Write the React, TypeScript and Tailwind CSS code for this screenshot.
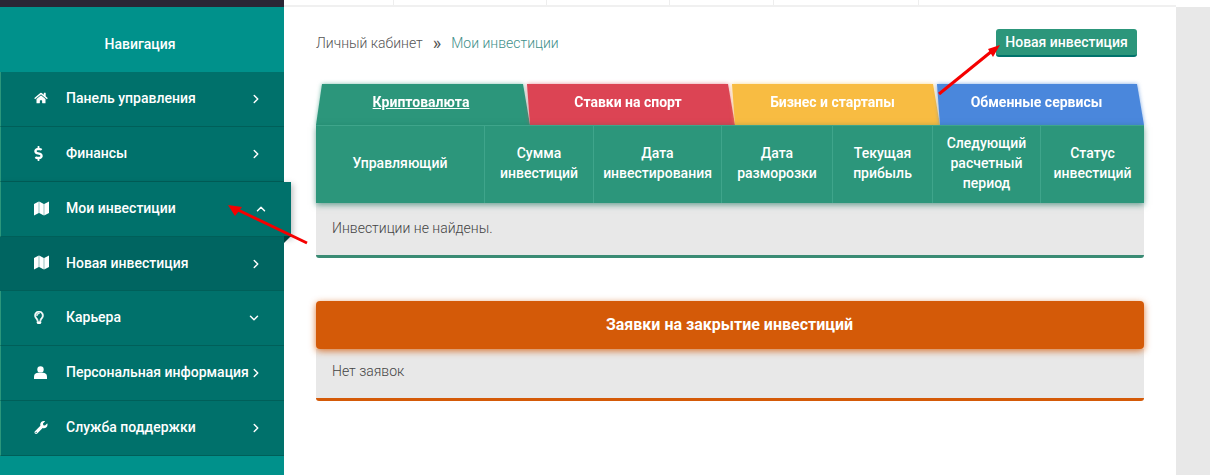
import { ChevronDown, ChevronRight, ChevronUp } from 'lucide-react'
import { FaDollarSign, FaHome, FaRegLightbulb, FaWrench } from 'react-icons/fa'
import type { ComponentType } from 'react'

type IconProps = { className?: string }

// folded map, three panels with thin gaps
const MapIcon = ({ className }: IconProps) => (
  <svg className={className} viewBox="0 0 15 15" fill="currentColor">
    <path d="M0 3 L4.8 .5 V12 L0 14.5Z M5.2 .5 L9.8 3 V14.5 L5.2 12Z M10.2 3 L15 .5 V12 L10.2 14.5Z" />
  </svg>
)

const UserIcon = ({ className }: IconProps) => (
  <svg className={className} viewBox="0 0 13 13" fill="currentColor">
    <circle cx="6.5" cy="3.4" r="3.2" />
    <path d="M0 13 V10.4 C0 8 2 6.8 4 6.8 H9 C11 6.8 13 8 13 10.4 V13Z" />
  </svg>
)

type NavItem = {
  label: string
  icon: ComponentType<IconProps>
  iconClass: string
  chevron: 'right' | 'down' | 'up'
  variant?: 'open' | 'sub'
}

const navItems: NavItem[] = [
  { label: 'Панель управления', icon: FaHome, iconClass: 'h-[12px] w-[14px]', chevron: 'right' },
  { label: 'Финансы', icon: FaDollarSign, iconClass: 'h-[15px] w-[9px]', chevron: 'right' },
  { label: 'Мои инвестиции', icon: MapIcon, iconClass: 'h-[15px] w-[15px]', chevron: 'up', variant: 'open' },
  { label: 'Новая инвестиция', icon: MapIcon, iconClass: 'h-[15px] w-[15px]', chevron: 'right', variant: 'sub' },
  { label: 'Карьера', icon: FaRegLightbulb, iconClass: 'h-[13px] w-[10px] stroke-[24]', chevron: 'down' },
  { label: 'Персональная информация', icon: UserIcon, iconClass: 'h-[13px] w-[13px]', chevron: 'right' },
  { label: 'Служба поддержки', icon: FaWrench, iconClass: 'h-[13px] w-[14px]', chevron: 'right' },
]

const columns = [
  'Управляющий',
  'Сумма инвестиций',
  'Дата инвестирования',
  'Дата разморозки',
  'Текущая прибыль',
  'Следующий расчетный период',
  'Статус инвестиций',
]

const SideItem = ({ item }: { item: NavItem }) => {
  const Icon = item.icon
  return (
    <div
      className={
        'relative flex items-center border-b border-l border-[#005f59] pl-[33px] text-sm font-medium text-white ' +
        (item.variant === 'sub' ? 'h-[54px] border-l-[#006561] bg-[#006561]' : 'h-[55px] border-l-[#2c967b] bg-[#00716b]') +
        (item.variant === 'open' ? ' w-[291px] shadow-[2px_2px_6px_rgba(0,0,0,0.25)]' : ' w-[284px]')
      }
    >
      <span className="mb-[2px] flex w-[32px] shrink-0 items-center">
        <Icon className={item.iconClass} />
      </span>
      <span className={(item.variant === 'sub' ? 'mb-[1px]' : 'mb-[3px]') + ' whitespace-nowrap'}>{item.label}</span>
      {item.chevron === 'right' && <ChevronRight className="absolute left-[248px] h-[14px] w-[14px]" strokeWidth={2.5} />}
      {item.chevron === 'down' && <ChevronDown className="absolute left-[246px] h-[14px] w-[14px]" strokeWidth={2.5} />}
      {item.chevron === 'up' && <ChevronUp className="absolute left-[253px] h-[14px] w-[14px]" strokeWidth={2.5} />}
      {item.variant === 'open' && (
        <span className="absolute left-[283px] top-[54px] h-0 w-0 border-r-[7px] border-t-[7px] border-r-transparent border-t-[#00423e]" />
      )}
    </div>
  )
}

const App = () => {
  return (
    <div className="relative flex h-[475px] w-[1210px] overflow-hidden bg-white font-['Roboto',sans-serif]">
      {/* Sidebar */}
      <aside className="flex w-[284px] shrink-0 flex-col bg-[#00918b]">
        <div className="h-[7px] bg-[#2a2635]" />
        <div className="flex h-[65px] items-center justify-center pr-[4px] pt-[8px] text-sm font-medium text-white">Навигация</div>
        <nav className="relative z-10 flex flex-col">
          {navItems.map((item) => (
            <SideItem key={item.label} item={item} />
          ))}
        </nav>
      </aside>

      <div className="flex min-w-0 flex-1 flex-col">
        {/* Top strip */}
        <div className="flex h-[7px] w-[892px] border-b-2 border-[#f0f0f0]">
          <div className="w-[110px] border-r border-[#eeeeee]" />
          <div className="w-[153px] border-r border-[#eeeeee]" />
          <div className="w-[123px] border-r border-[#eeeeee]" />
          <div className="w-[104px] border-r border-[#eeeeee]" />
          <div className="w-[145px] border-r border-[#eeeeee]" />
        </div>

        <div className="flex flex-1">
          <main className="w-[892px] shrink-0 px-8">
            {/* Breadcrumbs and action */}
            <div className="flex h-[77px] items-start justify-between pr-[7px] pt-[22px]">
              <div className="flex items-center pt-[4px] text-sm font-light text-[#555555]">
                <span>Личный кабинет</span>
                <span className="ml-[10px] mr-[10px] text-lg font-normal leading-none">»</span>
                <span className="text-[#3f8f8a]">Мои инвестиции</span>
              </div>
              <button className="h-[28px] w-[141px] rounded-[3px] border-b-2 border-[#00736c] bg-[#2c967b] text-sm font-medium text-white">
                Новая инвестиция
              </button>
            </div>

            {/* Category tabs */}
            <div className="flex h-[41px] text-sm font-bold text-white">
              <div className="w-[214px] drop-shadow-[0_0_2px_rgba(44,150,123,0.6)]">
                <div className="flex h-full items-center justify-center bg-[#2c967b] pb-[6px] pr-[4px] underline [clip-path:polygon(6px_0,calc(100%-7px)_0,100%_100%,0_100%)]">
                  Криптовалюта
                </div>
              </div>
              <div className="-ml-[3px] w-[208px] drop-shadow-[0_0_2px_rgba(220,68,84,0.6)]">
                <div className="flex h-full items-center justify-center bg-[#dc4454] pb-[6px] pr-[6px] [clip-path:polygon(0_0,calc(100%-7px)_0,100%_100%,3px_100%)]">
                  Ставки на спорт
                </div>
              </div>
              <div className="-ml-[3px] w-[208px] drop-shadow-[0_0_2px_rgba(248,188,66,0.6)]">
                <div className="flex h-full items-center justify-center bg-[#f8bc42] pb-[6px] pr-[7px] [clip-path:polygon(0_0,calc(100%-7px)_0,100%_100%,3px_100%)]">
                  Бизнес и стартапы
                </div>
              </div>
              <div className="-ml-[3px] w-[207px] drop-shadow-[0_0_2px_rgba(74,135,220,0.7)]">
                <div className="flex h-full items-center justify-center bg-[#4a87dc] pb-[6px] pr-[8px] [clip-path:polygon(0_0,calc(100%-7px)_0,100%_100%,3px_100%)]">
                  Обменные сервисы
                </div>
              </div>
            </div>

            {/* Investments table */}
            <div className="relative z-0 grid h-[78px] grid-cols-[169px_109px_128px_111px_100px_108px_103px] bg-[#2c967b] text-sm font-medium leading-[20px] text-white shadow-[0_2px_6px_rgba(20,110,90,0.6)]">
              {columns.map((title, i) => (
                <div
                  key={title}
                  className={
                    'flex items-center justify-center border-t border-[#3fa58b] px-[10px] pb-[4px] text-center ' +
                    (i < columns.length - 1 ? 'border-r' : '')
                  }
                >
                  {title}
                </div>
              ))}
            </div>
            <div className="flex h-[55px] items-center rounded-b-[3px] border-b-[3px] border-[#3a8b74] bg-[#e8e8e8] pb-[2px] pl-4 text-sm font-light text-[#444444]">
              Инвестиции не найдены.
            </div>

            {/* Closing requests */}
            <div className="relative z-0 mt-[43px] flex h-[48px] items-center justify-center rounded-[4px] bg-[#d45a08] pr-[1px] text-base font-bold text-white shadow-[0_2px_7px_rgba(212,90,8,0.8)]">
              Заявки на закрытие инвестиций
            </div>
            <div className="flex h-[52px] items-center rounded-b-[3px] border-b-[3px] border-[#d45a08] bg-[#e8e8e8] pb-[6px] pl-4 text-sm font-light text-[#444444]">
              Нет заявок
            </div>
          </main>
          <div className="flex-1 bg-[#e8e8e8]" />
        </div>
      </div>

      {/* Red annotation arrows */}
      <svg className="pointer-events-none absolute left-0 top-0 z-20" width="1210" height="475">
        <g stroke="#f50000" strokeWidth="3">
          <line x1="307" y1="243" x2="236" y2="209" />
          <line x1="939" y1="94" x2="992" y2="51" />
        </g>
        <polygon points="228,205 242,207 235,216" fill="#f50000" />
        <polygon points="1000,45 988,49 993,57" fill="#f50000" />
      </svg>
    </div>
  )
}

export default App
